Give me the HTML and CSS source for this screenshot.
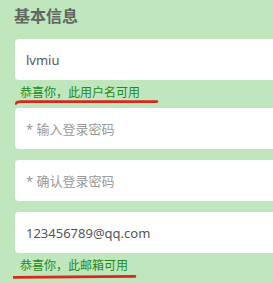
FILE: index.html
```html
<!DOCTYPE html>
<html lang="zh">
<head>
  <meta charset="UTF-8" />
  <meta name="viewport" content="width=device-width, initial-scale=1" />
  <title>基本信息</title>
  <link rel="stylesheet" href="styles.css">
</head>
<body>

  <!-- TITRE -->
  <div class="titre">基本信息</div>

  <!-- NOM D'UTILISATEUR -->
  <div class="champ"><input type="text" value="lvmiu" /></div>
  <div class="message">
    恭喜你，此用户名可用
    <svg class="souligne" width="150" height="6" viewBox="0 0 150 6">
      <path d="M1 4.5 Q2 2.6 6 2.6 L142 2.6" />
    </svg>
  </div>

  <!-- MOTS DE PASSE -->
  <div class="champ espace"><input type="password" placeholder="* 输入登录密码" /></div>
  <div class="champ espace"><input type="password" placeholder="* 确认登录密码" /></div>

  <!-- MAIL -->
  <div class="champ"><input type="text" value="123456789@qq.com" /></div>
  <div class="message">
    恭喜你，此邮箱可用
    <svg class="souligne deux" width="130" height="6" viewBox="0 0 130 6">
      <path d="M0 3.4 L122 2.4" />
    </svg>
  </div>

</body>
</html>
```

FILE: styles.css
```css
body {
  background: #c0e6bd;
  margin: 0;
  padding: 0 0 0 15px;
  overflow: hidden;
  font-family: "Noto Sans", "Noto Sans CJK SC", sans-serif;
}

.titre {
  color: #5f675f;
  font-weight: bold;
  font-size: 16px;
  line-height: 22px;
  padding-top: 4px;
  margin-left: -1px;
  margin-bottom: 13px;
  font-family: "Noto Sans CJK SC", sans-serif;
}

.champ {
  width: 300px;
}

.champ input {
  display: block;
  box-sizing: border-box;
  width: 100%;
  height: 41px;
  border: none;
  border-radius: 4px;
  background: #fff;
  padding: 0 11px;
  margin: 0;
  font-family: "Noto Sans", "Noto Sans CJK SC", sans-serif;
  font-size: 13px;
  color: #555;
  outline: none;
}

.champ input::placeholder {
  color: #999;
}

.espace {
  margin-bottom: 11px;
}

.message {
  position: relative;
  color: #1f8a1a;
  font-size: 12px;
  line-height: 16px;
  padding-left: 5px;
  margin-top: 4px;
  margin-bottom: 8px;
  font-family: "Noto Sans CJK SC", sans-serif;
}

.souligne {
  position: absolute;
  left: 0;
  top: 15px;
}

.souligne path {
  fill: none;
  stroke: #d9271c;
  stroke-width: 2.6;
  stroke-linecap: round;
}

.souligne.deux {
  left: -2px;
  top: 17px;
}
```
